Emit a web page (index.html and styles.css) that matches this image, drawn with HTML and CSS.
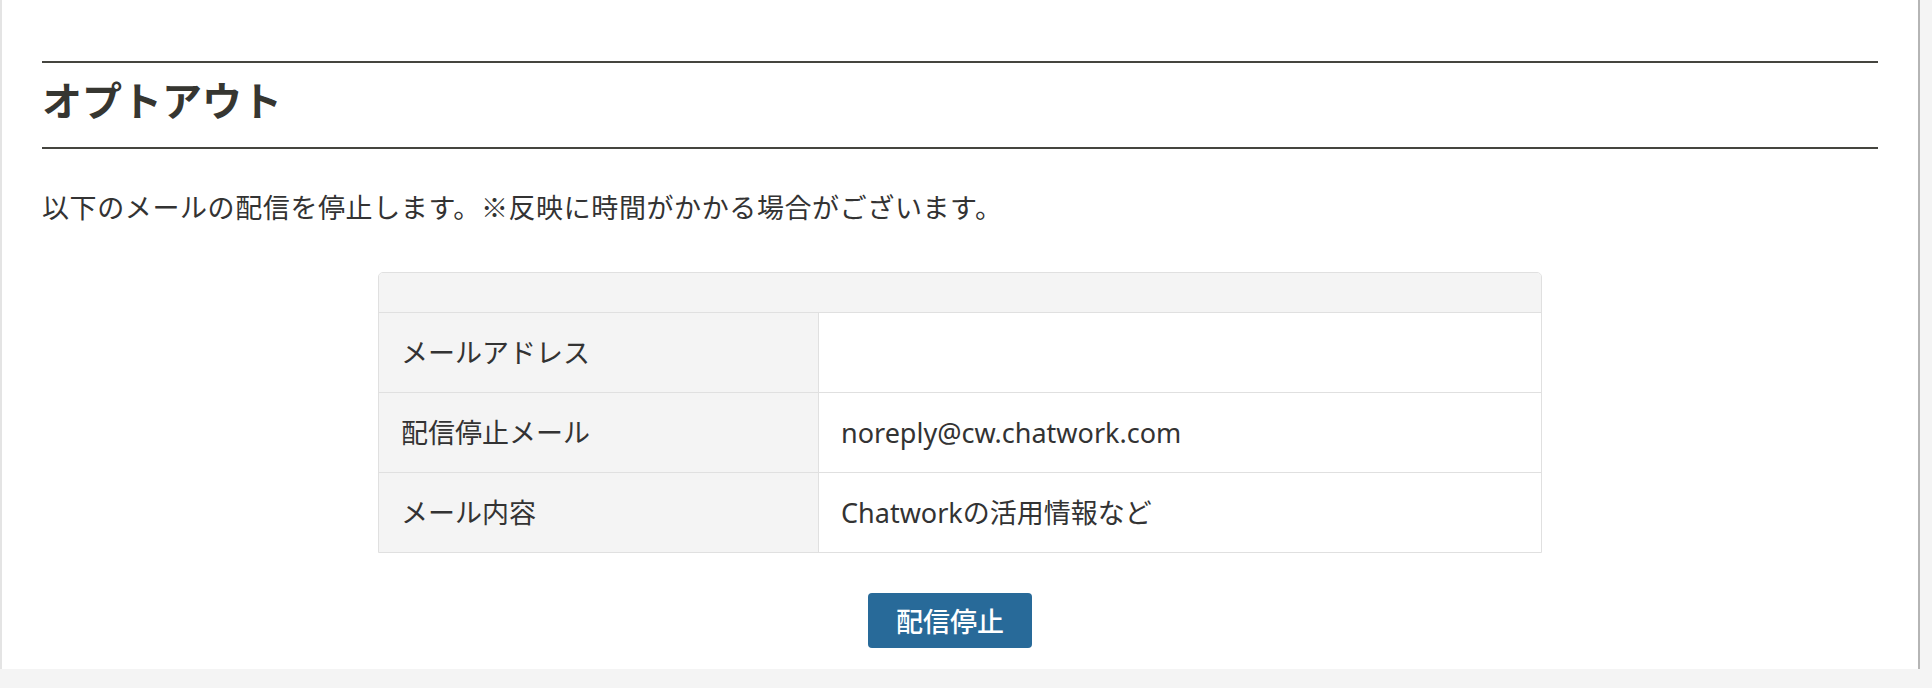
FILE: index.html
```html
<!DOCTYPE html>
<html lang="ja">
<head>
  <meta charset="UTF-8">
  <meta name="viewport" content="width=device-width, initial-scale=1">
  <title>オプトアウト</title>
  <link rel="stylesheet" href="styles.css">
</head>
<body>
  <div class="panel">
    <h1 class="page-title">オプトアウト</h1>

    <p class="lead">以下のメールの配信を停止します。※反映に時間がかかる場合がございます。</p>

    <table class="info-table">
      <tr>
        <th class="head" colspan="2"></th>
      </tr>
      <tr>
        <td class="label">メールアドレス</td>
        <td class="value"></td>
      </tr>
      <tr>
        <td class="label">配信停止メール</td>
        <td class="value">noreply@cw.chatwork.com</td>
      </tr>
      <tr>
        <td class="label">メール内容</td>
        <td class="value">Chatworkの活用情報など</td>
      </tr>
    </table>

    <div class="actions">
      <button type="button" class="btn-stop">配信停止</button>
    </div>
  </div>
</body>
</html>
```

FILE: styles.css
```css
* { margin: 0; padding: 0; box-sizing: border-box; }
body {
  font-family: 'Noto Sans', 'Noto Sans CJK JP', sans-serif;
  background: #f4f4f4;
  color: #333;
}
.panel {
  width: 1920px;
  background: #fff;
  border-left: 2px solid #e4e4e4;
  border-right: 2px solid #b5b5b5;
  padding: 61px 40px 21px;
}
.page-title {
  border-top: 2px solid #45453f;
  border-bottom: 2px solid #45453f;
  font-size: 40px;
  font-weight: 700;
  line-height: 56px;
  padding: 10px 0 18px;
  color: #363631;
}
.lead {
  font-family: 'Noto Sans CJK JP', sans-serif;
  font-size: 27px;
  line-height: 40px;
  letter-spacing: 0.6px;
  margin-top: 38px;
}
.info-table {
  width: 1164px;
  margin: 45px auto 0;
  border-collapse: separate;
  border-spacing: 0;
  border: 1px solid #e0e0e0;
  border-radius: 5px 5px 0 0;
  font-size: 27px;
}
.info-table .head {
  height: 39px;
  background: #f4f4f4;
  border-radius: 4px 4px 0 0;
}
.info-table td {
  border-top: 1px solid #e0e0e0;
  padding: 20px 22px;
  line-height: 39px;
  text-align: left;
  vertical-align: middle;
}
.info-table .label {
  width: 440px;
  background: #f4f4f4;
  border-right: 1px solid #e0e0e0;
}
.actions {
  text-align: center;
  margin-top: 40px;
}
.btn-stop {
  font-family: 'Noto Sans CJK JP', sans-serif;
  font-size: 27px;
  font-weight: 500;
  line-height: 41px;
  padding: 7px 28px;
  color: #fff;
  background: #286a99;
  border: none;
  border-radius: 4px;
  margin-right: 20px;
  cursor: pointer;
}
```
